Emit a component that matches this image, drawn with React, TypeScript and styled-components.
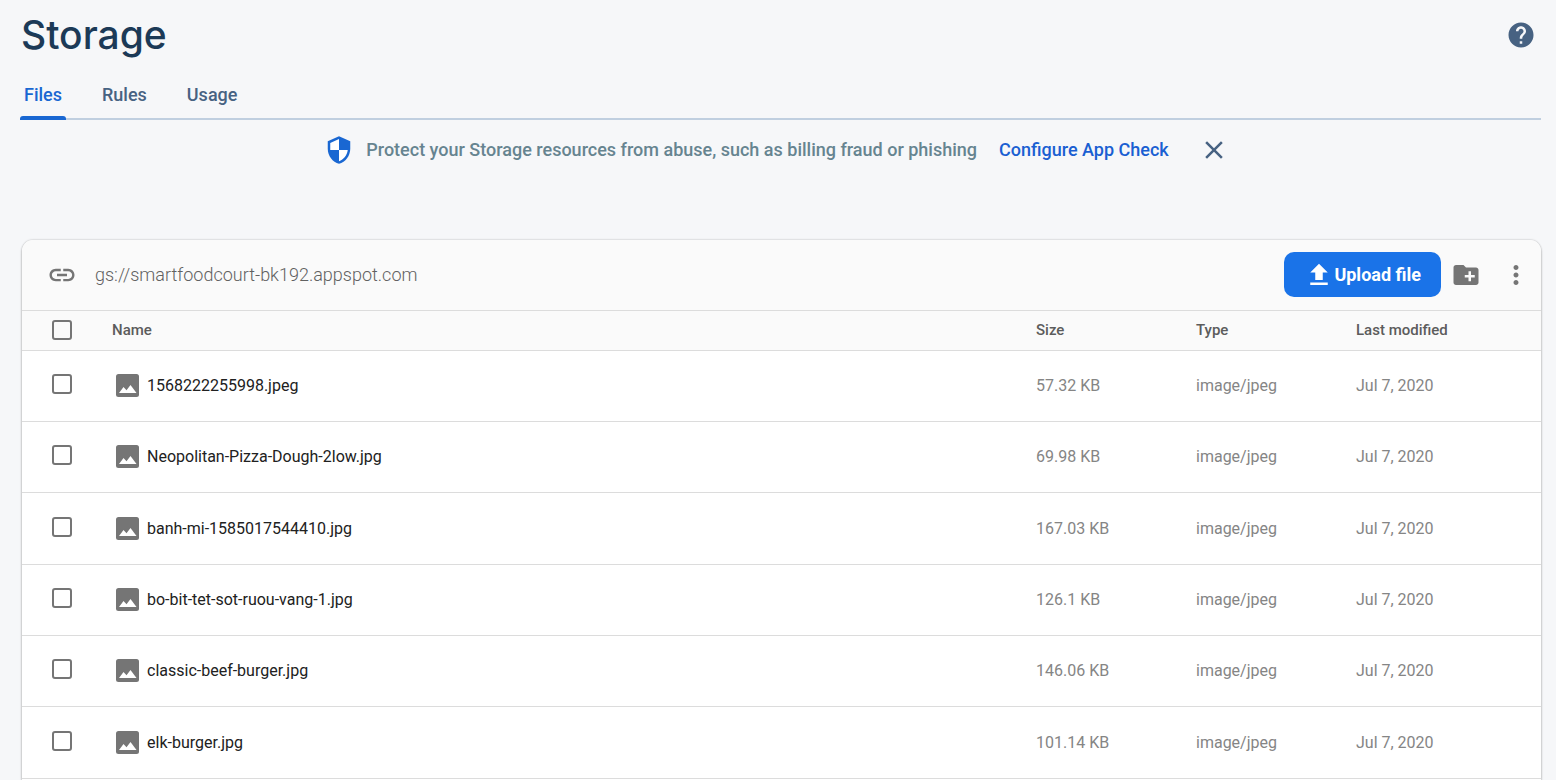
import React from "react";
import styled, { createGlobalStyle } from "styled-components";

const GlobalStyle = createGlobalStyle`
  * { box-sizing: border-box; }
  body {
    margin: 0;
    background: #f6f7f9;
    font-family: Roboto, "Liberation Sans", sans-serif;
    font-size: 16px;
    color: #212121;
  }
`;

const Page = styled.main`
  display: flex;
  flex-direction: column;
  padding: 12px 15px 0 20px;
  height: 100vh;
  overflow: hidden;
`;

const Header = styled.header`
  display: flex;
  align-items: center;
  justify-content: space-between;
  height: 46px;
  padding: 0 5px 0 1px;
`;

const Title = styled.h1`
  margin: 0;
  font-family: Inter, Roboto, sans-serif;
  font-size: 39px;
  line-height: 46px;
  font-weight: 500;
  color: #1c3a57;
`;

const IconButton = styled.button<{ $color?: string }>`
  display: flex;
  padding: 0;
  border: 0;
  background: none;
  color: ${(p) => p.$color ?? "#757575"};
  cursor: pointer;
`;

const BannerIcon = styled.span`
  display: flex;
  color: #1967d2;
`;

const Tabs = styled.nav`
  display: flex;
  gap: 32px;
  height: 62px;
  padding-top: 12px;
  border-bottom: 2px solid #c0cfe0;
`;

const Tab = styled.a<{ $active?: boolean }>`
  position: relative;
  display: flex;
  align-items: center;
  height: 50px;
  padding: 0 4px 2px;
  font-size: 18px;
  font-weight: 500;
  text-decoration: none;
  color: ${(p) => (p.$active ? "#1967d2" : "#476282")};
  &::after {
    content: "";
    display: ${(p) => (p.$active ? "block" : "none")};
    position: absolute;
    left: 0;
    right: 0;
    bottom: 0;
    height: 4px;
    border-radius: 3px 3px 0 0;
    background: #1967d2;
  }
`;

const Banner = styled.section`
  display: flex;
  align-items: center;
  justify-content: center;
  height: 60px;
  padding-right: 8px;
  font-size: 18px;
  font-weight: 500;
  color: #668490;
`;

const BannerText = styled.p`
  margin: 0 22px 0 12px;
  padding-bottom: 2px;
`;

const BannerLink = styled.a`
  margin-right: 30px;
  padding-bottom: 2px;
  color: #1a5fd2;
  text-decoration: none;
`;

const Card = styled.section`
  flex: 1 0 auto;
  margin: 60px 0 0 2px;
  border-radius: 11px 11px 0 0;
  background: #fff;
  overflow: hidden;
  box-shadow: 0 0 2px rgba(0, 0, 0, 0.3), 0 2px 3px rgba(0, 0, 0, 0.2);
`;

const Toolbar = styled.div`
  display: flex;
  align-items: center;
  height: 70px;
  padding: 0 10px 1px 25px;
  background: #fafafa;
  color: #757575;
`;

const Bucket = styled.span`
  flex: 1;
  margin-left: 18px;
  font-size: 18px;
  font-weight: 300;
  color: #616161;
`;

const UploadButton = styled.button`
  display: flex;
  align-items: center;
  height: 45px;
  padding: 0 20px;
  margin-right: 10px;
  border: 0;
  border-radius: 10px;
  background: #1a73e8;
  color: #fff;
  font-family: inherit;
  font-size: 18px;
  font-weight: 700;
  cursor: pointer;
`;

const ToolIcons = styled.div`
  display: flex;
  gap: 20px;
`;

const Table = styled.table`
  width: 100%;
  table-layout: fixed;
  border-collapse: separate;
  border-spacing: 0;
  text-align: left;
`;

const HeadCell = styled.th<{ $width?: number }>`
  width: ${(p) => (p.$width ? `${p.$width}px` : "auto")};
  height: 41px;
  padding: 0 0 2px;
  border-top: 1px solid #dcdcdc;
  border-bottom: 1px solid #dcdcdc;
  background: #fafafa;
  font-size: 15px;
  font-weight: 500;
  color: #5c5c5c;
`;

const Row = styled.tr`
  height: 71px;
  &:nth-child(3n) {
    height: 72px;
  }
`;

const Cell = styled.td`
  padding: 0 0 1px;
  border-bottom: 1px solid #dcdcdc;
  color: #858585;
`;

const Check = styled.input`
  appearance: none;
  display: block;
  width: 20px;
  height: 20px;
  margin: 0 0 0 30px;
  border: 2px solid #757575;
  border-radius: 3px;
  &:checked {
    background: #1a73e8;
  }
`;

const CheckCell = styled(Cell)`
  padding-bottom: 4px;
`;

const FileName = styled.div`
  display: flex;
  align-items: center;
  gap: 8px;
  padding-left: 4px;
  color: #212121;
`;

interface IconProps {
  d: string;
  size?: number;
}

const Icon = ({ d, size = 30 }: IconProps) => (
  <svg width={size} height={size} viewBox="0 0 24 24" fill="currentColor" aria-hidden="true">
    <path d={d} />
  </svg>
);

const paths = {
  help: "M12 2C6.48 2 2 6.48 2 12s4.48 10 10 10 10-4.480 10-10S17.520 2 12 2zm1 17h-2v-2h2v2zm2.070-7.750l-.9.920C13.450 12.900 13 13.500 13 15h-2v-.5c0-1.100.45-2.100 1.170-2.830l1.240-1.260c.37-.36.590-.86.590-1.410 0-1.100-.9-2-2-2s-2 .9-2 2H8c0-2.210 1.790-4 4-4s4 1.790 4 4c0 .88-.36 1.680-.93 2.250z",
  close: "M19 6.410L17.590 5 12 10.590 6.410 5 5 6.410 10.590 12 5 17.590 6.410 19 12 13.410 17.590 19 19 17.590 13.410 12z",
  link: "M3.900 12c0-1.710 1.390-3.100 3.100-3.100h4V7H7c-2.760 0-5 2.240-5 5s2.240 5 5 5h4v-1.900H7c-1.710 0-3.100-1.390-3.100-3.100zM8 13h8v-2H8v2zm9-6h-4v1.900h4c1.710 0 3.100 1.390 3.100 3.100s-1.390 3.100-3.100 3.100h-4V17h4c2.760 0 5-2.240 5-5s-2.240-5-5-5z",
  upload: "M9 16h6v-6h4l-7-7-7 7h4zm-4 2h14v2H5z",
  folder: "M20 6h-8l-2-2H4c-1.110 0-1.990.89-1.990 2L2 18c0 1.110.89 2 2 2h16c1.110 0 2-.89 2-2V8c0-1.110-.89-2-2-2zm-1 8h-3v3h-2v-3h-3v-2h3V9h2v3h3v2z",
  more: "M12 8c1.100 0 2-.9 2-2s-.9-2-2-2-2 .9-2 2 .9 2 2 2zm0 2c-1.100 0-2 .9-2 2s.9 2 2 2 2-.9 2-2-.9-2-2-2zm0 6c-1.100 0-2 .9-2 2s.9 2 2 2 2-.9 2-2-.9-2-2-2z",
  shield: "M12 1L3 5v6c0 5.550 3.840 10.740 9 12 5.160-1.260 9-6.450 9-12V5l-9-4z",
};

const ShieldIcon = () => (
  <svg width="30" height="30" viewBox="0 0 24 24" aria-hidden="true">
    <path d={paths.shield} fill="currentColor" />
    <path d="M12 3.190L5 6.300V12h7zM12 12h7c-.53 4.120-3.280 7.790-7 8.940z" fill="#fff" />
  </svg>
);

const ImageIcon = () => (
  <svg width="23" height="23" viewBox="0 0 23 23" aria-hidden="true">
    <rect width="23" height="23" rx="2.500" fill="#757575" />
    <path d="M3 19 L7.500 13 L10.500 16.200 L14.500 11 L20.500 19 Z" fill="#fff" />
  </svg>
);

const files = [
  ["1568222255998.jpeg", "57.32 KB"],
  ["Neopolitan-Pizza-Dough-2low.jpg", "69.98 KB"],
  ["banh-mi-1585017544410.jpg", "167.03 KB"],
  ["bo-bit-tet-sot-ruou-vang-1.jpg", "126.1 KB"],
  ["classic-beef-burger.jpg", "146.06 KB"],
  ["elk-burger.jpg", "101.14 KB"],
];

export default function App() {
  return (
    <Page>
      <GlobalStyle />
      <Header>
        <Title>Storage</Title>
        <IconButton $color="#476282" aria-label="Help">
          <Icon d={paths.help} />
        </IconButton>
      </Header>
      <Tabs>
        <Tab href="#files" $active>Files</Tab>
        <Tab href="#rules">Rules</Tab>
        <Tab href="#usage">Usage</Tab>
      </Tabs>
      <Banner>
        <BannerIcon>
          <ShieldIcon />
        </BannerIcon>
        <BannerText>Protect your Storage resources from abuse, such as billing fraud or phishing</BannerText>
        <BannerLink href="#app-check">Configure App Check</BannerLink>
        <IconButton $color="#476282" aria-label="Dismiss">
          <Icon d={paths.close} />
        </IconButton>
      </Banner>
      <Card>
        <Toolbar>
          <Icon d={paths.link} />
          <Bucket>gs://smartfoodcourt-bk192.appspot.com</Bucket>
          <UploadButton>
            <Icon d={paths.upload} />
            Upload file
          </UploadButton>
          <ToolIcons>
            <IconButton aria-label="Create folder">
              <Icon d={paths.folder} />
            </IconButton>
            <IconButton aria-label="More options">
              <Icon d={paths.more} />
            </IconButton>
          </ToolIcons>
        </Toolbar>
        <Table>
          <thead>
            <tr>
              <HeadCell $width={90}>
                <Check type="checkbox" aria-label="Select all files" />
              </HeadCell>
              <HeadCell>Name</HeadCell>
              <HeadCell $width={160}>Size</HeadCell>
              <HeadCell $width={160}>Type</HeadCell>
              <HeadCell $width={185}>Last modified</HeadCell>
            </tr>
          </thead>
          <tbody>
            {files.map(([name, size]) => (
              <Row key={name}>
                <CheckCell>
                  <Check type="checkbox" aria-label={`Select ${name}`} />
                </CheckCell>
                <Cell>
                  <FileName>
                    <ImageIcon />
                    {name}
                  </FileName>
                </Cell>
                <Cell>{size}</Cell>
                <Cell>image/jpeg</Cell>
                <Cell>Jul 7, 2020</Cell>
              </Row>
            ))}
          </tbody>
        </Table>
      </Card>
    </Page>
  );
}
